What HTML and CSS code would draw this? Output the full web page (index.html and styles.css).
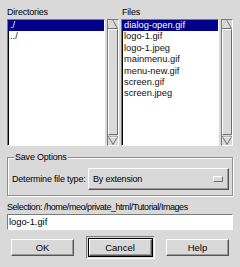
FILE: index.html
```html
<!DOCTYPE html>
<html lang="en">
  <head>
    <meta charset="UTF-8" />
    <title>Save File</title>
    <link rel="stylesheet" href="styles.css">
  </head>
  <body>
    <div class="dialog">
      <div class="browsers">
        <div class="pane">
          <div class="caption">Directories</div>
          <div class="pane-body">
            <ul class="listbox">
              <li class="selected">./</li>
              <li>../</li>
            </ul>
            <div class="scrollbar">
              <svg class="arrow" width="10" height="9" viewBox="0 0 10 9">
                <polygon points="5,0.5 9.5,8.5 0.5,8.5" fill="#d9d9d9" stroke="#6e6e6e" />
                <line x1="5" y1="1" x2="1" y2="8" stroke="#fff" />
              </svg>
              <div class="slider"></div>
              <svg class="arrow" width="10" height="9" viewBox="0 0 10 9">
                <polygon points="0.5,0.5 9.5,0.5 5,8.5" fill="#d9d9d9" stroke="#6e6e6e" />
                <line x1="1" y1="1" x2="9" y2="1" stroke="#fff" />
              </svg>
            </div>
          </div>
        </div>
        <div class="pane">
          <div class="caption">Files</div>
          <div class="pane-body">
            <ul class="listbox">
              <li class="selected">dialog-open.gif</li>
              <li>logo-1.gif</li>
              <li>logo-1.jpeg</li>
              <li>mainmenu.gif</li>
              <li>menu-new.gif</li>
              <li>screen.gif</li>
              <li>screen.jpeg</li>
            </ul>
            <div class="scrollbar">
              <svg class="arrow" width="10" height="9" viewBox="0 0 10 9">
                <polygon points="5,0.5 9.5,8.5 0.5,8.5" fill="#d9d9d9" stroke="#6e6e6e" />
                <line x1="5" y1="1" x2="1" y2="8" stroke="#fff" />
              </svg>
              <div class="slider"></div>
              <svg class="arrow" width="10" height="9" viewBox="0 0 10 9">
                <polygon points="0.5,0.5 9.5,0.5 5,8.5" fill="#d9d9d9" stroke="#6e6e6e" />
                <line x1="1" y1="1" x2="9" y2="1" stroke="#fff" />
              </svg>
            </div>
          </div>
        </div>
      </div>

      <fieldset class="options">
        <legend>Save Options</legend>
        <div class="option-row">
          <span class="option-label">Determine file type:</span>
          <button class="optionmenu">By extension<span class="indicator"></span></button>
        </div>
      </fieldset>

      <div class="selection-label">Selection: /home/meo/private_html/Tutorial/Images</div>
      <input class="entry" type="text" value="logo-1.gif" />

      <div class="actions">
        <button class="btn">OK</button>
        <span class="default-ring"><button class="btn focused">Cancel</button></span>
        <button class="btn">Help</button>
      </div>
    </div>
  </body>
</html>
```

FILE: styles.css
```css
* {
  padding: 0;
  margin: 0;
  box-sizing: border-box;
}
html {
  font-family: 'Liberation Sans', Arial, sans-serif;
  font-size: 9px;
  letter-spacing: -0.2px;
  line-height: 12px;
  color: #000;
  background-color: #d9d9d9;
}
body {
  background-color: #d9d9d9;
  width: 240px;
  height: 267px;
  overflow: hidden;
}
.dialog {
  padding: 6px 7px 0;
}
.browsers {
  display: grid;
  grid-template-columns: 1fr 1fr;
  gap: 2px;
}
.caption {
  height: 12px;
  margin-bottom: 1px;
}
.pane:last-child .caption {
  padding-left: 1px;
}
.pane-body {
  display: flex;
  gap: 2px;
  height: 127px;
}
.listbox {
  list-style: none;
  flex: 1;
  background-color: #fff;
  border: 1px solid;
  border-color: #7a7a7a #fff #fff #7a7a7a;
  box-shadow: inset 1px 1px 0 #000;
}
.listbox li {
  height: 11.4px;
  line-height: 11.4px;
  padding-left: 2px;
  font-size: 9.3px;
  letter-spacing: 0;
  white-space: nowrap;
  color: #111;
}
.listbox li.selected {
  background-color: #00008a;
  color: #fff;
}
.scrollbar {
  width: 12px;
  display: flex;
  flex-direction: column;
  align-items: stretch;
  border: 1px solid;
  border-color: #7a7a7a #fff #fff #7a7a7a;
}
.arrow {
  display: block;
  margin: 0 auto;
  flex: none;
}
.slider {
  flex: 1;
  border: 1px solid;
  border-color: #fff #6e6e6e #6e6e6e #fff;
  margin: 0 0 1px;
}
.options {
  margin-top: 5px;
  padding: 5px 3px 5px 4px;
  border: 1px solid #8e8e8e;
  box-shadow: inset 1px 1px 0 #fff, 1px 1px 0 #fff;
}
.options legend {
  margin-left: 2px;
  padding: 0 1px;
  background-color: #d9d9d9;
  line-height: 12px;
}
.option-row {
  display: flex;
  align-items: center;
  gap: 3px;
}
.option-label {
  width: 73px;
  white-space: nowrap;
}
.optionmenu {
  flex: 1;
  height: 22px;
  display: flex;
  align-items: center;
  justify-content: space-between;
  padding: 0 5px 0 4px;
  font: inherit;
  letter-spacing: inherit;
  color: #000;
  background-color: #d9d9d9;
  border: 1px solid;
  border-color: #fff #555 #555 #fff;
  box-shadow: inset -1px -1px 0 #9a9a9a;
  text-align: left;
}
.indicator {
  width: 10px;
  height: 6px;
  border: 1px solid;
  border-color: #fff #6e6e6e #6e6e6e #fff;
}
.selection-label {
  margin-top: 5px;
  height: 12px;
  letter-spacing: -0.45px;
  white-space: nowrap;
}
.entry {
  display: block;
  width: 100%;
  height: 16px;
  margin-top: 1px;
  padding: 0 1px;
  font: inherit;
  font-size: 9.3px;
  color: #000;
  background-color: #fff;
  border: 1px solid;
  border-color: #7a7a7a #fff #fff #7a7a7a;
  outline: none;
}
.actions {
  display: flex;
  align-items: center;
  justify-content: space-between;
  margin-top: 6px;
  padding: 0 4px 0 4px;
}
.btn {
  width: 63px;
  height: 17px;
  font: inherit;
  font-size: 9.5px;
  color: #000;
  background-color: #d9d9d9;
  border: 1px solid;
  border-color: #fff #555 #555 #fff;
  box-shadow: inset -1px -1px 0 #9a9a9a;
}
.default-ring {
  display: block;
  padding: 2px;
  border: 1px solid;
  border-color: #7a7a7a #fff #fff #7a7a7a;
}
.btn.focused {
  outline: 1px solid #000;
  display: block;
}
```
